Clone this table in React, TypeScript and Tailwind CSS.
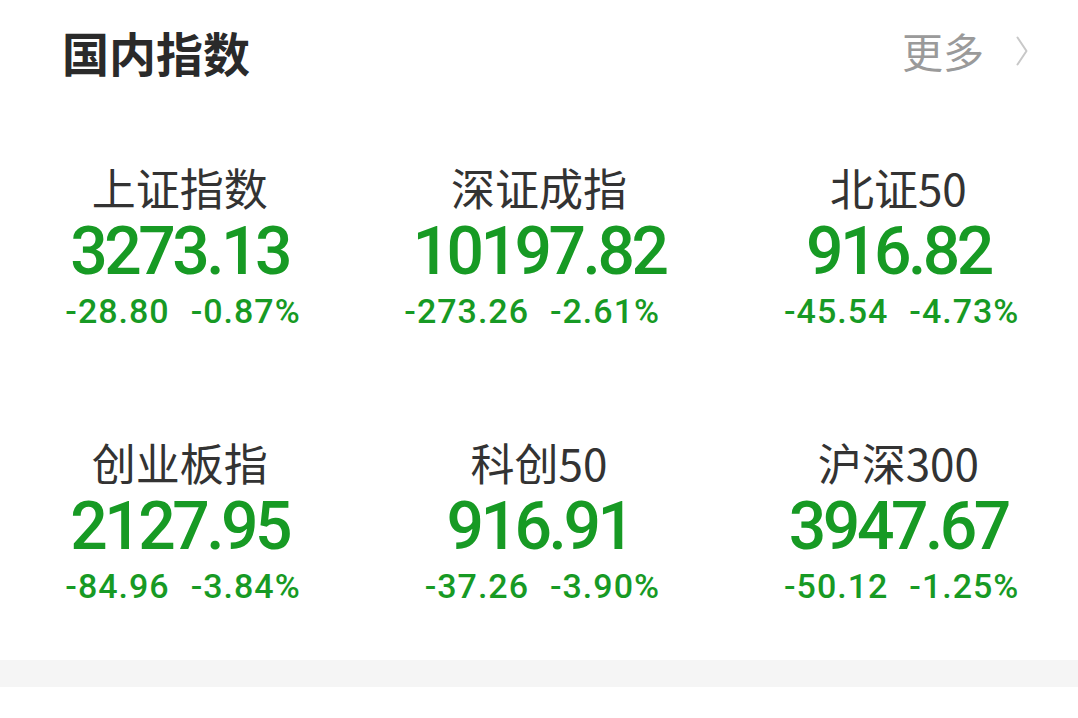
interface IndexItem {
  name: string
  value: string
  change: string
  percent: string
}

const indices: IndexItem[] = [
  { name: '上证指数', value: '3273.13', change: '-28.80', percent: '-0.87%' },
  { name: '深证成指', value: '10197.82', change: '-273.26', percent: '-2.61%' },
  { name: '北证50', value: '916.82', change: '-45.54', percent: '-4.73%' },
  { name: '创业板指', value: '2127.95', change: '-84.96', percent: '-3.84%' },
  { name: '科创50', value: '916.91', change: '-37.26', percent: '-3.90%' },
  { name: '沪深300', value: '3947.67', change: '-50.12', percent: '-1.25%' },
]

const cjk = "font-['Noto_Sans_CJK_SC','Noto_Sans',sans-serif]"
const num = "font-['Roboto','Liberation_Sans',sans-serif]"

function IndexCell({ item }: { item: IndexItem }) {
  return (
    <div className="flex flex-col items-center">
      <div className={`${cjk} text-[44px] leading-[44px] text-[#333333]`}>{item.name}</div>
      <div className={`${num} mt-[10px] text-[66px] font-medium leading-[66px] tracking-[-3.5px] text-[#179a24]`}>
        {item.value}
      </div>
      <div className={`${num} mt-[9px] grid w-full grid-cols-2 text-[34px] font-medium leading-[34px] tracking-[1px] text-[#179a24]`}>
        <span className="pr-[10px] text-right">{item.change}</span>
        <span className="pl-[11px] text-left">{item.percent}</span>
      </div>
    </div>
  )
}

export default function App() {
  return (
    <div className="h-[718px] w-[1078px] overflow-hidden bg-white">
      <div className="flex h-[80px] items-start justify-between pt-[28px] pl-[62px] pr-[50px]">
        <h1 className={`${cjk} text-[47px] font-bold leading-[47px] text-[#2a2a2a]`}>国内指数</h1>
        <div className="flex items-center pt-[2px]">
          <span className={`${cjk} text-[41px] leading-[41px] text-[#9a9a9a]`}>更多</span>
          <svg width="12" height="30" viewBox="0 0 12 30" className="ml-[32px]">
            <polyline points="1.5,1.5 10.5,15 1.5,28.5" fill="none" stroke="#c8c8c8" strokeWidth="2" strokeLinecap="round" strokeLinejoin="round" />
          </svg>
        </div>
      </div>
      <div className="mt-[85px] grid grid-cols-3 gap-y-[112px]">
        {indices.map((item) => (
          <IndexCell key={item.name} item={item} />
        ))}
      </div>
      <div className="mt-[57px] h-[27px] bg-[#f5f5f5]" />
    </div>
  )
}
